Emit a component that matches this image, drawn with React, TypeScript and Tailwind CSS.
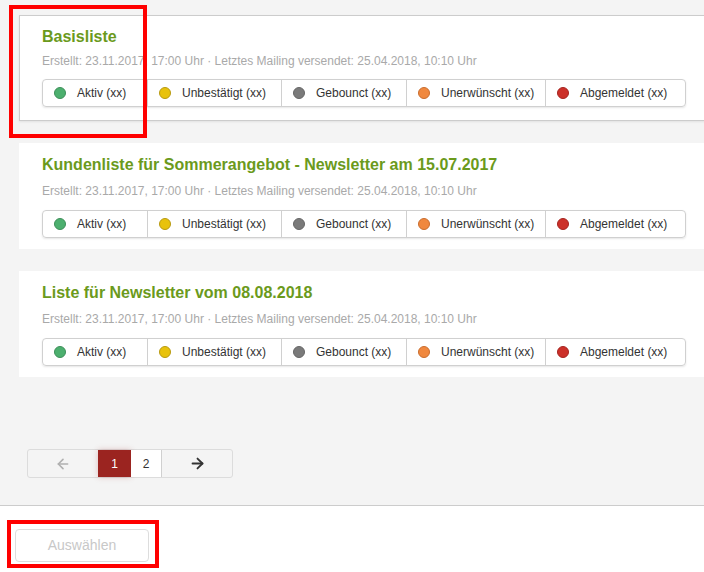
import React from 'react';
import { ArrowLeft, ArrowRight } from 'lucide-react';

const statuses = [
  { label: 'Aktiv (xx)', dot: 'bg-[#4caf6e] border-[#3d8f59]', w: 'w-[104px]' },
  { label: 'Unbestätigt (xx)', dot: 'bg-[#e8c20c] border-[#b89a10]', w: 'w-[134px]' },
  { label: 'Gebounct (xx)', dot: 'bg-[#7a7a7a] border-[#666666]', w: 'w-[125px]' },
  { label: 'Unerwünscht (xx)', dot: 'bg-[#f0883e] border-[#c96d2e]', w: 'w-[139px]' },
  { label: 'Abgemeldet (xx)', dot: 'bg-[#cc3029] border-[#a52520]', w: 'flex-1' },
];

const lists = [
  { title: 'Basisliste', active: true },
  { title: 'Kundenliste für Sommerangebot - Newsletter am 15.07.2017', active: false },
  { title: 'Liste für Newsletter vom 08.08.2018', active: false },
];

const ListCard = ({ title, active }: { title: string; active: boolean }) => (
  <div
    className={`ml-[19px] w-[686px] bg-white pt-[11px] pl-[22px] pr-[18px] ${
      active
        ? 'pb-[13px] border border-[#cccccc] shadow-[0_1px_2px_rgba(0,0,0,0.08)]'
        : 'pb-[10px] border border-transparent'
    }`}
  >
    <h2 className="text-[16px] leading-[20px] font-bold text-[#6b9a1c]">{title}</h2>
    <p className={`${active ? 'mt-[6px]' : 'mt-[8px]'} text-[12px] leading-[16px] text-[#a9a9a9]`}>
      Erstellt: 23.11.2017, 17:00 Uhr · Letztes Mailing versendet: 25.04.2018, 10:10 Uhr
    </p>
    <div
      className={`${active ? 'mt-[10px]' : 'mt-[11px]'} flex h-[28px] w-[644px] rounded-[4px] border border-[#d0d0d0] shadow-[0_1px_2px_rgba(0,0,0,0.1)]`}
    >
      {statuses.map((s, i) => (
        <div
          key={i}
          className={`${s.w} flex items-center pl-[11px] gap-[11px] ${i > 0 ? 'border-l border-[#d0d0d0]' : ''}`}
        >
          <span className={`h-[12px] w-[12px] rounded-full border ${s.dot}`} />
          <span className="text-[12px] text-[#333333]">{s.label}</span>
        </div>
      ))}
    </div>
  </div>
);

export default function App() {
  return (
    <div className="relative flex h-[572px] w-[704px] flex-col overflow-hidden font-['Liberation_Sans',Arial,sans-serif]">
      <div className="flex h-[505px] shrink-0 flex-col bg-[#f4f4f4] pt-[15px]">
        <div className="flex flex-col gap-[22px]">
          {lists.map((l, i) => (
            <ListCard key={i} title={l.title} active={l.active} />
          ))}
        </div>

        <div className="ml-[27px] mt-[72px] flex h-[29px] w-[206px] rounded-[3px] border border-[#dcdcdc] bg-[#f4f4f4]">
          <div className="flex w-[70px] items-center justify-center text-[#b0b0b0]">
            <ArrowLeft size={16} strokeWidth={2.4} />
          </div>
          <div className="flex w-[33px] items-center justify-center bg-[#9b2420] text-[12px] text-white shadow-[0_0_6px_rgba(155,36,32,0.25)]">
            1
          </div>
          <div className="flex w-[30px] items-center justify-center bg-white text-[12px] text-[#333333]">2</div>
          <div className="flex flex-1 items-center justify-center border-l border-[#d0d0d0] text-[#333333]">
            <ArrowRight size={17} strokeWidth={2.6} />
          </div>
        </div>
      </div>

      <div className="flex-1 border-t border-[#cccccc] bg-white pl-[15px] pt-[23px]">
        <button className="h-[33px] w-[134px] rounded-[4px] border border-[#dddddd] bg-white text-[14px] text-[#c8c8c8]">
          Auswählen
        </button>
      </div>

      <div className="pointer-events-none absolute left-[9px] top-[5px] h-[133px] w-[138px] border-[4px] border-[#ff0000]" />
      <div className="pointer-events-none absolute left-[7px] top-[520px] h-[48px] w-[152px] border-[4px] border-[#ff0000]" />
    </div>
  );
}
